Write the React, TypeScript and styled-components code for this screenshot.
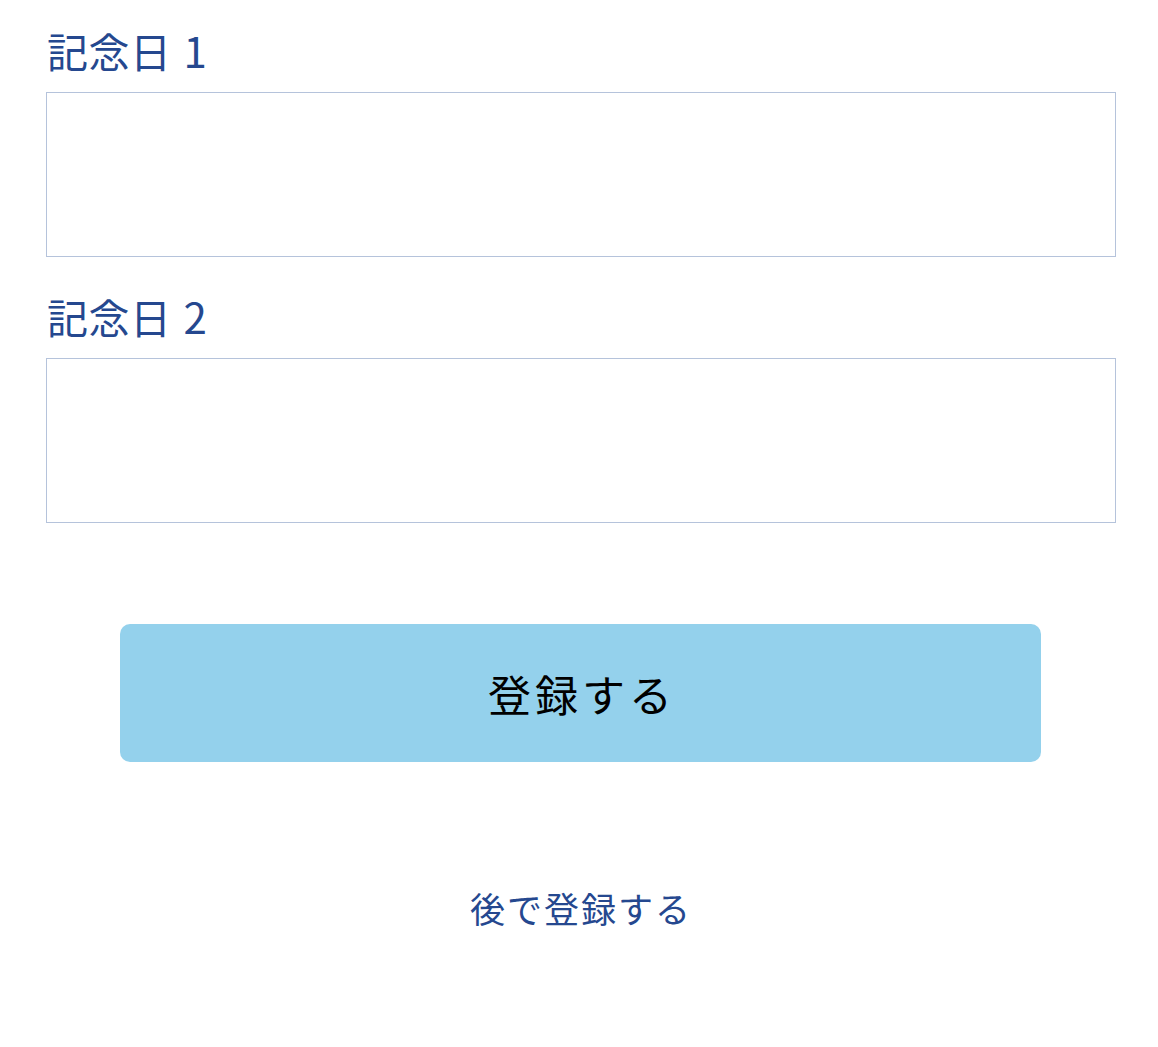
import styled, { createGlobalStyle } from "styled-components";

const GlobalStyle = createGlobalStyle`
  body {
    margin: 0;
    background: #ffffff;
    font-family: "Noto Sans CJK JP", "Noto Sans", sans-serif;
  }
`;

const Page = styled.div`
  padding: 26px 42px 80px 46px;
  display: flex;
  flex-direction: column;
`;

const Field = styled.div`
  display: flex;
  flex-direction: column;
  gap: 18px;
  margin-bottom: 35px;
`;

const Label = styled.label`
  font-size: 41px;
  line-height: 48px;
  height: 48px;
  color: #25488f;
  padding-left: 1px;
  letter-spacing: 0.5px;
`;

const Num = styled.span`
  margin-left: 12px;
  font-size: 42px;
`;

const Input = styled.input`
  box-sizing: border-box;
  width: 100%;
  height: 165px;
  border: 1px solid #b5c3db;
  border-radius: 0;
  background: #ffffff;
  outline: none;
  font-size: 32px;
  padding: 0 16px;
`;

const Actions = styled.div`
  display: flex;
  flex-direction: column;
  align-items: center;
  margin-top: 66px;
`;

const SubmitButton = styled.button`
  width: 921px;
  height: 138px;
  margin-right: 2px;
  border: none;
  border-radius: 10px;
  background: #94d1ec;
  color: #000000;
  font-family: inherit;
  font-size: 43px;
  letter-spacing: 4px;
  padding: 0 0 0 4px;
  cursor: pointer;
`;

const LaterLink = styled.a`
  margin-top: 124px;
  font-size: 35px;
  line-height: 44px;
  color: #25488f;
  letter-spacing: 2px;
  text-decoration: none;
  cursor: pointer;
`;

const App = () => (
  <>
    <GlobalStyle />
    <Page>
      <Field>
        <Label>
          記念日<Num>1</Num>
        </Label>
        <Input type="text" />
      </Field>
      <Field>
        <Label>
          記念日<Num>2</Num>
        </Label>
        <Input type="text" />
      </Field>
      <Actions>
        <SubmitButton>登録する</SubmitButton>
        <LaterLink>後で登録する</LaterLink>
      </Actions>
    </Page>
  </>
);

export default App;
